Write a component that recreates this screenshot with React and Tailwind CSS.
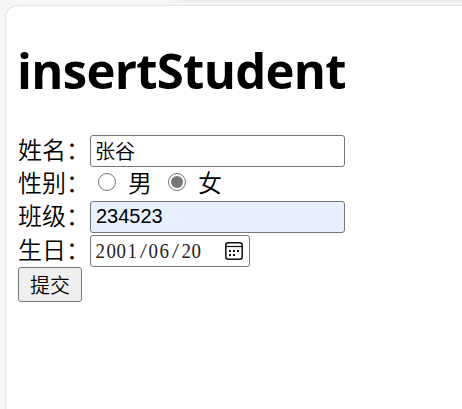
const cjk = "font-['Noto_Sans_CJK_SC',sans-serif]";

function Row({ label, className, children }) {
  return (
    <div className={`flex items-center ${className}`}>
      <span className="w-[72px] shrink-0 pb-[4px] text-[24px] leading-[28px] font-[350] whitespace-nowrap">{label}</span>
      {children}
    </div>
  );
}

function Radio({ checked }) {
  return (
    <span className="flex size-[18px] shrink-0 items-center justify-center rounded-full border-[1.5px] border-[#767676] bg-white">
      {checked && <span className="size-[12px] rounded-full bg-[#767676]" />}
    </span>
  );
}

function CalendarIcon() {
  return (
    <svg className="h-[18px] w-[18px]" viewBox="0 0 18 18" fill="none">
      <rect x="0.8" y="0.8" width="16.4" height="16.4" rx="2.5" stroke="#101010" strokeWidth="1.5" />
      <path d="M1 4.5H17" stroke="#101010" strokeWidth="1.2" />
      <path d="M4 8h2v2H4zM8 8h2v2H8zM12 8h2v2h-2zM4 12h2v2H4zM8 12h2v2H8z" fill="#101010" />
    </svg>
  );
}

function DateText({ value }) {
  return (
    <span className="flex font-['Liberation_Serif',serif] text-[21px] leading-7 text-[#222222]">
      {value.split("").map((char, i) => (
        <span
          key={i}
          className={char === "/" ? "w-[10.7px] origin-center scale-x-125 text-center text-[#444444]" : "w-[10.7px] scale-x-90 text-center"}
        >
          {char}
        </span>
      ))}
    </span>
  );
}

export default function App() {
  return (
    <div className={`h-[409px] w-[462px] overflow-hidden bg-[#f7f7f7] pl-[6px] text-black ${cjk}`}>
      <div className="ml-[157px] h-[3px] bg-linear-to-r from-[#f7f7f7] to-[#ededed] to-10%" />
      <main className="mt-[3px] h-[420px] w-[480px] rounded-tl-[12px] bg-white pl-3 shadow-[0_0_2px_#bbbbbb]">
        <h1 className="-ml-px h-[129px] pt-[31px] font-['Open_Sans',sans-serif] text-[49px] leading-[66px] font-bold tracking-[-0.7px]">
          insertStudent
        </h1>
        <Row label="姓名：" className="h-8">
          <div className="flex h-8 w-[255px] items-center rounded-[3px] border border-[#767676] px-[4px] text-[20px] leading-7 font-[350]">张谷</div>
        </Row>
        <Row label="性别：" className="h-[34px]">
          <div className="flex items-center pb-[4px] pl-2 text-[24px] leading-[30px] font-[350]">
            <Radio />
            <span className="ml-3 w-[40px]">男</span>
            <Radio checked />
            <span className="ml-3">女</span>
          </div>
        </Row>
        <Row label="班级：" className="h-8">
          <div className="flex h-8 w-[255px] items-center rounded-[3px] border border-[#767676] bg-[#e8f0fe] px-[5px] pb-[2px] font-['Liberation_Sans',sans-serif] text-[20px]">234523</div>
        </Row>
        <Row label="生日：" className="mt-[2px] h-8">
          <div className="flex h-8 w-[160px] items-center justify-between rounded-[3px] border border-[#767676] pr-[6px] pl-[4px]">
            <DateText value="2001/06/20" />
            <CalendarIcon />
          </div>
        </Row>
        <button className="flex h-[35px] w-16 items-center justify-center rounded-[3px] border border-[#767676] bg-[#efefef] text-[20px] leading-7 font-[350]">
          提交
        </button>
      </main>
    </div>
  );
}
